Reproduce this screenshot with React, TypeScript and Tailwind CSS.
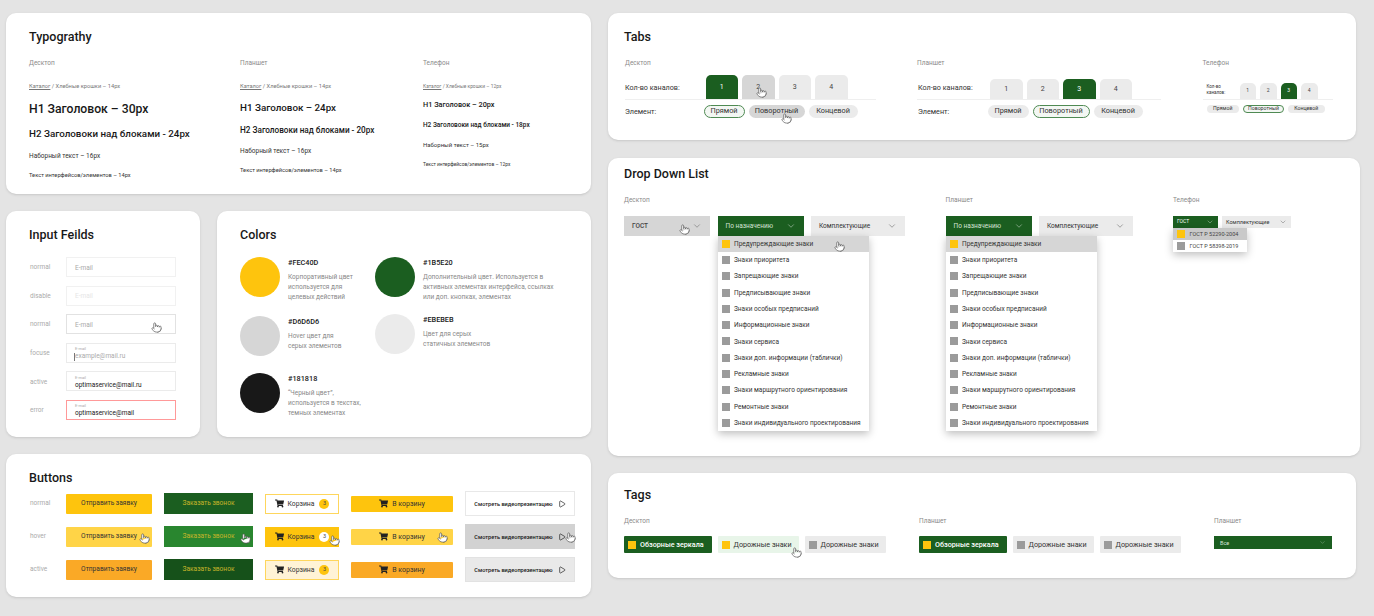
import type { ReactNode } from "react";
import { ChevronDown, Play, Pointer } from "lucide-react";
import { FaShoppingCart } from "react-icons/fa";

const menuItems = [
  "Предупреждающие знаки",
  "Знаки приоритета",
  "Запрещающие знаки",
  "Предписывающие знаки",
  "Знаки особых предписаний",
  "Информационные знаки",
  "Знаки сервиса",
  "Знаки доп. информации (таблички)",
  "Рекламные знаки",
  "Знаки маршрутного ориентирования",
  "Ремонтные знаки",
  "Знаки индивидуального проектирования",
];

function Cursor({ className }: { className: string }) {
  return (
    <Pointer
      size={11}
      strokeWidth={1.5}
      className={`absolute fill-white text-[#555] ${className}`}
    />
  );
}

function Title({ children }: { children: string }) {
  return <h2 className="h-4 text-[12.5px] font-medium leading-[18px] text-[#181818]">{children}</h2>;
}

function Device({ children }: { children: string }) {
  return <p className="mt-[14px] h-[10px] text-[6.5px] leading-[11px] text-[#8a8a8a]">{children}</p>;
}

function Crumb({ small }: { small?: boolean }) {
  return (
    <p className={`mt-[13px] leading-[10px] text-[#777] ${small ? "text-[4.9px]" : "text-[5.7px]"}`}>
      <span className="underline">Каталог</span> / Хлебные крошки – {small ? "12px" : "14px"}
    </p>
  );
}

function Typography() {
  return (
    <section className="h-[181px] rounded-[10px] bg-white pl-[23px] pt-[15px] shadow-sm">
      <Title>Typograthy</Title>
      <div className="flex">
        <div className="w-[211px]">
          <Device>Десктоп</Device>
          <Crumb />
          <p className="mt-[13px] text-[12.2px] font-medium leading-[10px]">H1 Заголовок – 30px</p>
          <p className="mt-[15px] text-[9.8px] font-medium leading-[10px]">H2 Заголовоки над блоками - 24px</p>
          <p className="mt-3 text-[6.5px] leading-[10px] text-[#333]">Наборный текст – 16px</p>
          <p className="mt-[9px] text-[5.7px] leading-[10px] text-[#333]">Текст интерфейсов/элементов – 14px</p>
        </div>
        <div className="w-[183px]">
          <Device>Планшет</Device>
          <Crumb />
          <p className="mt-3 text-[9.8px] font-medium leading-[10px]">H1 Заголовок – 24px</p>
          <p className="mt-3 text-[8.2px] font-medium leading-[10px]">H2 Заголовоки над блоками - 20px</p>
          <p className="mt-[11px] text-[6.5px] leading-[10px] text-[#333]">Наборный текст – 16px</p>
          <p className="mt-[9px] text-[5.7px] leading-[10px] text-[#333]">Текст интерфейсов/элементов – 14px</p>
        </div>
        <div>
          <Device>Телефон</Device>
          <Crumb small />
          <p className="mt-[9px] text-[7.3px] font-medium leading-[10px]">H1 Заголовок – 20px</p>
          <p className="mt-[10px] text-[6.5px] font-medium leading-[10px]">H2 Заголовоки над блоками - 18px</p>
          <p className="mt-[10px] text-[6px] leading-[10px] text-[#333]">Наборный текст – 15px</p>
          <p className="mt-[9px] text-[4.9px] leading-[10px] text-[#333]">Текст интерфейсов/элементов – 12px</p>
        </div>
      </div>
    </section>
  );
}

function InputRow({
  label,
  caption,
  caret,
  value,
  border,
  valueClass,
  cursor,
}: {
  label: string;
  caption?: boolean;
  caret?: boolean;
  value: string;
  border: string;
  valueClass: string;
  cursor?: boolean;
}) {
  return (
    <div className="flex h-5 items-center">
      <span className="w-[37px] pl-px pt-[2px] text-[6.5px] text-[#aaa]">{label}</span>
      <div className={`relative flex h-5 w-[110px] flex-col justify-center border pl-[8px] pt-[2px] ${border}`}>
        {caption && <span className="text-[4px] leading-[6px] text-[#aaa]">E-mail</span>}
        <span className={`flex items-center text-[6.5px] leading-[9px] ${valueClass}`}>
          {caret && <span className="-ml-px h-2 w-px bg-[#777]" />}
          {value}
        </span>
        {cursor && <Cursor className="left-[84px] top-[7px]" />}
      </div>
    </div>
  );
}

function Inputs() {
  return (
    <section className="h-[226px] w-[194px] rounded-[10px] bg-white pl-[23px] pt-[15px] shadow-sm">
      <Title>Input Feilds</Title>
      <div className="mt-[15px] flex flex-col gap-[8.6px]">
        <InputRow label="normal" value="E-mail" border="border-[#f1f1f1]" valueClass="text-[#aaa]" />
        <InputRow label="disable" value="E-mail" border="border-[#f1f1f1]" valueClass="text-[#e6e6e6]" />
        <InputRow label="normal" value="E-mail" border="border-[#e2e2e2]" valueClass="text-[#aaa]" cursor />
        <InputRow label="focuse" caption caret value="example@mail.ru" border="border-[#ebebeb]" valueClass="text-[#aaa]" />
        <InputRow label="active" caption value="optimaservice@mail.ru" border="border-[#ebebeb]" valueClass="text-[#181818]" />
        <InputRow label="error" caption value="optimaservice@mail" border="border-[#f99]" valueClass="text-[#181818]" />
      </div>
    </section>
  );
}

function Swatch({
  color,
  hex,
  lines,
  className,
}: {
  color: string;
  hex: string;
  lines: string[];
  className?: string;
}) {
  return (
    <div className={`flex gap-2 ${className ?? ""}`}>
      <div className={`size-10 shrink-0 rounded-full ${color}`} />
      <div>
        <p className="pt-px text-[7.3px] font-medium leading-[10px] text-[#181818]">{hex}</p>
        <div className="mt-[5px] text-[6.5px] leading-[9.8px] text-[#888]">
          {lines.map((l) => (
            <p key={l}>{l}</p>
          ))}
        </div>
      </div>
    </div>
  );
}

function Colors() {
  return (
    <section className="h-[226px] flex-1 rounded-[10px] bg-white pl-[23px] pt-[15px] shadow-sm">
      <Title>Colors</Title>
      <div className="mt-[15px] flex">
        <div className="w-[135px]">
          <Swatch
            color="bg-[#fec40d]"
            hex="#FEC40D"
            lines={["Корпоративный цвет", "используется для", "целевых действий"]}
          />
          <Swatch
            className="mt-[13.6px]"
            color="bg-[#d6d6d6]"
            hex="#D6D6D6"
            lines={["Ноver цвет для", "серых элементов"]}
          />
          <Swatch
            className="mt-[17px]"
            color="bg-[#181818]"
            hex="#181818"
            lines={["“Черный цвет”,", "используется  в текстах,", "темных элементах"]}
          />
        </div>
        <div>
          <Swatch
            color="bg-[#1b5e20]"
            hex="#1B5E20"
            lines={[
              "Дополнительный цвет. Используется в",
              "активных элементах интерфейса, ссылках",
              "или доп. кнопках, элементах",
            ]}
          />
          <Swatch
            className="mt-[11.6px]"
            color="bg-[#ebebeb]"
            hex="#EBEBEB"
            lines={["Цвет для серых", "статичных элементов"]}
          />
        </div>
      </div>
    </section>
  );
}

function Cart({ badge }: { badge: string }) {
  return (
    <>
      <FaShoppingCart className="size-[9px] text-[#222]" />
      <span className="ml-[4px] pt-px text-[6.8px] text-[#333]">Корзина</span>
      <span className={`ml-[5px] flex size-[10px] items-center justify-center rounded-full text-[5.5px] text-[#444] ${badge}`}>
        3
      </span>
    </>
  );
}

function ToCart() {
  return (
    <>
      <FaShoppingCart className="size-[9px] text-[#222]" />
      <span className="ml-[4px] pt-px text-[7px] text-[#333]">В корзину</span>
    </>
  );
}

function Video() {
  return (
    <>
      <span className="pt-px text-[5.6px] font-medium text-[#181818]">Смотреть видеопрезентацию</span>
      <Play size={8} strokeWidth={2} className="ml-[5px] text-[#181818]" />
    </>
  );
}

function Buttons() {
  return (
    <section className="h-[143px] rounded-[10px] bg-white pl-[23px] pt-[15px] shadow-sm">
      <Title>Buttons</Title>
      <div className="mt-[6px] flex flex-col gap-2">
        <div className="flex h-[25px] items-center gap-3">
          <span className="-mr-3 w-[37px] pl-px text-[6.5px] text-[#aaa]">normal</span>
          <div className="flex h-5 w-[86px] items-center justify-center rounded-[1px] bg-[#fec40d] pt-px text-[6.6px] text-[#333]">Отправить заявку</div>
          <div className="flex h-[21px] w-[89px] items-center justify-center bg-[#1b5e20] pt-px text-[6.6px] text-[#c6b52a]">Заказать звонок</div>
          <div className="flex h-5 w-[74px] items-center justify-center border border-[#fed65c]"><Cart badge="bg-[#fec40d]" /></div>
          <div className="flex h-4 w-[102px] items-center justify-center rounded-[1px] bg-[#fec40d]"><ToCart /></div>
          <div className="flex h-[25px] w-[110px] items-center justify-center border border-[#e8e8e8] bg-white"><Video /></div>
        </div>
        <div className="flex h-[25px] items-center gap-3">
          <span className="-mr-3 w-[37px] pl-px text-[6.5px] text-[#aaa]">hover</span>
          <div className="relative flex h-5 w-[86px] items-center justify-center rounded-[1px] bg-[#ffd447] pt-px text-[6.6px] text-[#333]">Отправить заявку<Cursor className="left-[73px] top-[6px]" /></div>
          <div className="relative flex h-[21px] w-[89px] items-center justify-center bg-[#29862f] pt-px text-[6.6px] text-[#c6b52a]">Заказать звонок<Cursor className="left-[76px] top-[7px]" /></div>
          <div className="relative flex h-5 w-[74px] items-center justify-center bg-[#fec40d]"><Cart badge="bg-white" /><Cursor className="left-[64px] top-2" /></div>
          <div className="relative flex h-4 w-[102px] items-center justify-center rounded-[1px] bg-[#ffd447]"><ToCart /><Cursor className="left-[86px] top-[3px]" /></div>
          <div className="relative flex h-[25px] w-[110px] items-center justify-center bg-[#d2d2d2]"><Video /><Cursor className="left-[100px] top-2" /></div>
        </div>
        <div className="flex h-[25px] items-center gap-3">
          <span className="-mr-3 w-[37px] pl-px text-[6.5px] text-[#aaa]">active</span>
          <div className="flex h-5 w-[86px] items-center justify-center rounded-[1px] bg-[#faa926] pt-px text-[6.6px] text-[#333]">Отправить заявку</div>
          <div className="flex h-[21px] w-[89px] items-center justify-center bg-[#16511a] pt-px text-[6.6px] text-[#c6b52a]">Заказать звонок</div>
          <div className="flex h-5 w-[74px] items-center justify-center border border-[#fed65c] bg-[#fff3d6]"><Cart badge="bg-[#fec40d]" /></div>
          <div className="flex h-4 w-[102px] items-center justify-center rounded-[1px] bg-[#faa926]"><ToCart /></div>
          <div className="flex h-[25px] w-[110px] items-center justify-center border border-[#e2e2e2] bg-[#e9e9e9]"><Video /></div>
        </div>
      </div>
    </section>
  );
}

function Tabs() {
  const tab = "flex w-[32.5px] items-center justify-center rounded-t-[5px] text-[7px]";
  const pill = "flex h-[12.5px] items-center justify-center rounded-full pt-px text-[7.3px] text-[#333]";
  const phoneTab = "flex w-[16.5px] items-center justify-center rounded-t-[5px] text-[5px]";
  const phonePill = "flex h-2 items-center justify-center rounded-full text-[5.2px] text-[#333]";
  return (
    <section className="h-[127px] w-[748px] rounded-[10px] bg-white pl-4 pt-[15px] shadow-sm">
      <Title>Tabs</Title>
      <div className="flex">
        <div className="w-[293px] pl-px">
          <Device>Десктоп</Device>
          <div className="mt-[7px] flex h-[25px] w-[251px] border-b border-[#efefef]">
            <span className="w-[80.5px] pt-[7.5px] text-[7.2px] text-[#333]">Кол-во каналов:</span>
            <div className="flex h-6 gap-[4px]">
              <div className={`${tab} bg-[#1b5e20] text-white`}>1</div>
              <div className={`${tab} relative bg-[#d6d6d6] text-[#444]`}>2<Cursor className="left-[14px] top-3" /></div>
              <div className={`${tab} bg-[#ebebeb] text-[#444]`}>3</div>
              <div className={`${tab} bg-[#ebebeb] text-[#444]`}>4</div>
            </div>
          </div>
          <div className="mt-[5px] flex items-center">
            <span className="w-[78.5px] pt-[2px] text-[7.2px] text-[#333]">Элемент:</span>
            <div className="flex gap-[4px]">
              <div className={`${pill} w-[41px] border border-[#4f8a53] bg-[#f3f7f3]`}>Прямой</div>
              <div className={`${pill} relative w-[56px] bg-[#d6d6d6]`}>Поворотный<Cursor className="left-[32px] top-2" /></div>
              <div className={`${pill} w-[49px] bg-[#ebebeb]`}>Концевой</div>
            </div>
          </div>
        </div>
        <div className="w-[285.5px]">
          <Device>Планшет</Device>
          <div className="mt-[11px] flex h-[21px] w-[244px] border-b border-[#efefef]">
            <span className="w-[73px] pl-px pt-[3.5px] text-[7.2px] text-[#333]">Кол-во каналов:</span>
            <div className="flex h-5 gap-[4px]">
              <div className={`${tab} bg-[#ebebeb] text-[#444]`}>1</div>
              <div className={`${tab} bg-[#ebebeb] text-[#444]`}>2</div>
              <div className={`${tab} bg-[#1b5e20] text-white`}>3</div>
              <div className={`${tab} bg-[#ebebeb] text-[#444]`}>4</div>
            </div>
          </div>
          <div className="mt-[5px] flex items-center">
            <span className="w-[70.5px] pl-px pt-[2px] text-[7.2px] text-[#333]">Элемент:</span>
            <div className="flex gap-[4px]">
              <div className={`${pill} w-[41px] bg-[#ebebeb]`}>Прямой</div>
              <div className={`${pill} w-[57px] border border-[#4f8a53] bg-[#f3f7f3]`}>Поворотный</div>
              <div className={`${pill} w-[49px] bg-[#ebebeb]`}>Концевой</div>
            </div>
          </div>
        </div>
        <div className="w-[130px]">
          <Device>Телефон</Device>
          <div className="mt-[15px] flex h-[17px] border-b border-[#efefef]">
            <span className="w-[37px] pl-1 pt-px text-[4.5px] leading-[6px] text-[#333]">Кол-во<br />каналов:</span>
            <div className="flex h-4 gap-[4px]">
              <div className={`${phoneTab} bg-[#ebebeb] text-[#444]`}>1</div>
              <div className={`${phoneTab} bg-[#ebebeb] text-[#444]`}>2</div>
              <div className={`${phoneTab} bg-[#1b5e20] text-white`}>3</div>
              <div className={`${phoneTab} bg-[#ebebeb] text-[#444]`}>4</div>
            </div>
          </div>
          <div className="mt-[5px] flex gap-[4px] pl-1">
            <div className={`${phonePill} w-[32.5px] bg-[#ebebeb]`}>Прямой</div>
            <div className={`${phonePill} w-[41px] border border-[#4f8a53] bg-[#f3f7f3]`}>Поворотный</div>
            <div className={`${phonePill} w-[36.5px] bg-[#ebebeb]`}>Концевой</div>
          </div>
        </div>
      </div>
    </section>
  );
}

function Select({ label, className, chevron }: { label: string; className: string; chevron: string }) {
  return (
    <div className={`flex h-5 items-center justify-between pl-2 pr-2 text-[6.5px] ${className}`}>
      <span className="pt-[2px]">{label}</span>
      <ChevronDown size={10} strokeWidth={1} className={chevron} />
    </div>
  );
}

function Menu({ cursor }: { cursor?: boolean }) {
  return (
    <div className="absolute left-0 top-full w-[151px] bg-white shadow-[0_3px_8px_rgba(0,0,0,0.25)]">
      {menuItems.map((item, i) => (
        <div
          key={item}
          className={`relative flex h-[16.3px] items-center gap-[4px] pl-[4.5px] text-[6.5px] text-[#333] ${i === 0 ? "bg-[#d6d6d6]" : ""}`}
        >
          <span className={`size-2 shrink-0 ${i === 0 ? "bg-[#fec40d]" : "bg-[#9b9b9b]"}`} />
          <span className="pt-[2px]">{item}</span>
          {i === 0 && cursor && <Cursor className="left-[116px] top-[5px]" />}
        </div>
      ))}
    </div>
  );
}

function DropDowns() {
  return (
    <section className="h-[298px] w-[752px] rounded-[10px] bg-white pl-4 pt-[7px] shadow-sm">
      <Title>Drop Down List</Title>
      <div className="flex">
        <div className="w-[321.5px]">
          <Device>Десктоп</Device>
          <div className="mt-[11px] flex gap-[7.5px]">
            <div className="relative w-[86px]">
              <Select label="ГОСТ" className="bg-[#d6d6d6] font-medium text-[#444]" chevron="text-[#444]" />
              <Cursor className="left-[55px] top-2" />
            </div>
            <div className="relative w-[86px]">
              <Select label="По назначению" className="bg-[#1b5e20] text-[#d6e4d6]" chevron="text-white" />
              <Menu cursor />
            </div>
            <Select label="Комплектующие" className="w-[94px] bg-[#ebebeb] text-[#333]" chevron="text-[#333]" />
          </div>
        </div>
        <div className="w-[227.5px]">
          <Device>Планшет</Device>
          <div className="mt-[11px] flex gap-[7.5px]">
            <div className="relative w-[86px]">
              <Select label="По назначению" className="bg-[#1b5e20] text-[#d6e4d6]" chevron="text-white" />
              <Menu />
            </div>
            <Select label="Комплектующие" className="w-[94px] bg-[#ebebeb] text-[#333]" chevron="text-[#333]" />
          </div>
        </div>
        <div>
          <Device>Телефон</Device>
          <div className="mt-[11px] flex gap-1">
            <div className="relative w-[45px]">
              <div className="flex h-3 items-center justify-between bg-[#1b5e20] pl-1 pr-1 text-[5px] text-white">
                <span className="pt-px">ГОСТ</span>
                <ChevronDown size={8} strokeWidth={1} />
              </div>
              <div className="absolute left-0 top-full w-[73.5px] bg-white text-[5.5px] text-[#444] shadow-[0_3px_8px_rgba(0,0,0,0.25)]">
                <div className="flex h-[12.3px] items-center gap-[4.5px] bg-[#c9c9c9] pl-1">
                  <span className="size-2 bg-[#fec40d]" />
                  <span className="pt-px">ГОСТ Р 52290-2004</span>
                </div>
                <div className="flex h-[12.3px] items-center gap-[4.5px] pl-1">
                  <span className="size-2 bg-[#9b9b9b]" />
                  <span className="pt-px">ГОСТ Р 58398-2019</span>
                </div>
              </div>
            </div>
            <div className="flex h-3 w-[69px] items-center justify-between bg-[#ebebeb] pl-1 pr-1 text-[5.5px] text-[#333]">
              <span className="pt-px">Комплектующие</span>
              <ChevronDown size={8} strokeWidth={1} />
            </div>
          </div>
        </div>
      </div>
    </section>
  );
}

function Tag({ label, square, className, children }: {
  label: string;
  square: string;
  className: string;
  children?: ReactNode;
}) {
  return (
    <div className={`relative flex h-[17px] items-center gap-[4px] rounded-[1px] pl-1 text-[7.2px] ${className}`}>
      <span className={`size-2 shrink-0 ${square}`} />
      <span className="pt-[2px]">{label}</span>
      {children}
    </div>
  );
}

function Tags() {
  return (
    <section className="h-[105px] w-[748px] rounded-[10px] bg-white pl-4 pt-[13px] shadow-sm">
      <Title>Tags</Title>
      <div className="flex">
        <div className="w-[295px]">
          <Device>Десктоп</Device>
          <div className="mt-[10px] flex gap-[6px]">
            <Tag label="Обзорные зеркала" square="bg-[#fec40d]" className="w-[87.5px] bg-[#1b5e20] font-medium text-white" />
            <Tag label="Дорожные знаки" square="bg-[#fec40d]" className="w-[81px] bg-[#e8f5e9] text-[#333]">
              <Cursor className="left-[73px] top-[11px]" />
            </Tag>
            <Tag label="Дорожные знаки" square="bg-[#9b9b9b]" className="w-[81px] bg-[#ebebeb] text-[#333]" />
          </div>
        </div>
        <div className="w-[295px]">
          <Device>Планшет</Device>
          <div className="mt-[10px] flex gap-[6px]">
            <Tag label="Обзорные зеркала" square="bg-[#fec40d]" className="w-[87.5px] bg-[#1b5e20] font-medium text-white" />
            <Tag label="Дорожные знаки" square="bg-[#9b9b9b]" className="w-[81px] bg-[#ebebeb] text-[#333]" />
            <Tag label="Дорожные знаки" square="bg-[#9b9b9b]" className="w-[81px] bg-[#ebebeb] text-[#333]" />
          </div>
        </div>
        <div className="w-[118px]">
          <Device>Планшет</Device>
          <div className="mt-[10px] flex h-[13px] items-center justify-between bg-[#1b5e20] px-[6px] text-[5.5px] text-[#d6e4d6]">
            <span className="pt-px">Все</span>
            <ChevronDown size={7} strokeWidth={1} />
          </div>
        </div>
      </div>
    </section>
  );
}

export default function App() {
  return (
    <div className="flex h-screen items-start gap-[17px] overflow-hidden bg-[#e4e4e4] pl-[6px] pt-[13px] font-[Roboto,sans-serif] text-[#181818]">
      <div className="flex w-[585px] flex-col gap-[17px]">
        <Typography />
        <div className="flex gap-[17px]">
          <Inputs />
          <Colors />
        </div>
        <Buttons />
      </div>
      <div className="flex flex-col gap-[17.5px]">
        <Tabs />
        <DropDowns />
        <Tags />
      </div>
    </div>
  );
}
